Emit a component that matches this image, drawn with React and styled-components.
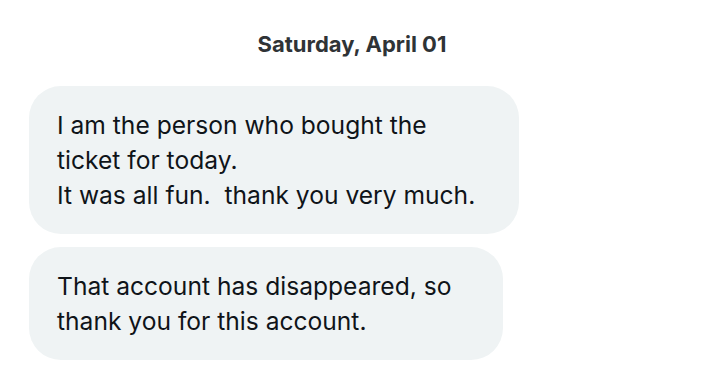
import styled, { createGlobalStyle } from 'styled-components';

const GlobalStyle = createGlobalStyle`
    html, body {
        margin: 0;
        padding: 0;
        background: #ffffff;
    }

    body {
        font-family: Inter, "Noto Sans", sans-serif;
        color: #0f1419;
    }
`;

const messages = [
    {
        id: 1,
        width: 490,
        text: 'I am the person who bought the\nticket for today.\nIt was all fun.  thank you very much.',
    },
    {
        id: 2,
        width: 474,
        text: 'That account has disappeared, so\nthank you for this account.',
    },
];

const App = () => {
    return (
        <>
            <GlobalStyle />
            <Wrapper>
                <DateLabel>Saturday, April 01</DateLabel>
                <MessageList>
                    {messages.map((msg) => (
                        <Bubble key={msg.id} $width={msg.width}>
                            {msg.text}
                        </Bubble>
                    ))}
                </MessageList>
            </Wrapper>
        </>
    );
};

const Wrapper = styled.main`
    width: 704px;
    height: 368px;
    display: flex;
    flex-direction: column;
    padding-top: 30px;
    box-sizing: border-box;
    overflow: hidden;
`;

const DateLabel = styled.h2`
    margin: 0 0 28px;
    text-align: center;
    font-family: Inter, Roboto, sans-serif;
    font-size: 22px;
    font-weight: 700;
    line-height: 28px;
    color: #2f3336;
    letter-spacing: 0;
`;

const MessageList = styled.ul`
    list-style: none;
    margin: 0;
    padding: 0 0 0 29px;
    display: flex;
    flex-direction: column;
    align-items: flex-start;
    gap: 13px;
`;

const Bubble = styled.li`
    width: ${(p) => p.$width}px;
    box-sizing: border-box;
    padding: 22px 28px 21px;
    background: #eff3f4;
    border-radius: 32px;
    font-size: 24.6px;
    line-height: 35px;
    white-space: pre-wrap;
    color: #0f1419;
`;

export default App;
